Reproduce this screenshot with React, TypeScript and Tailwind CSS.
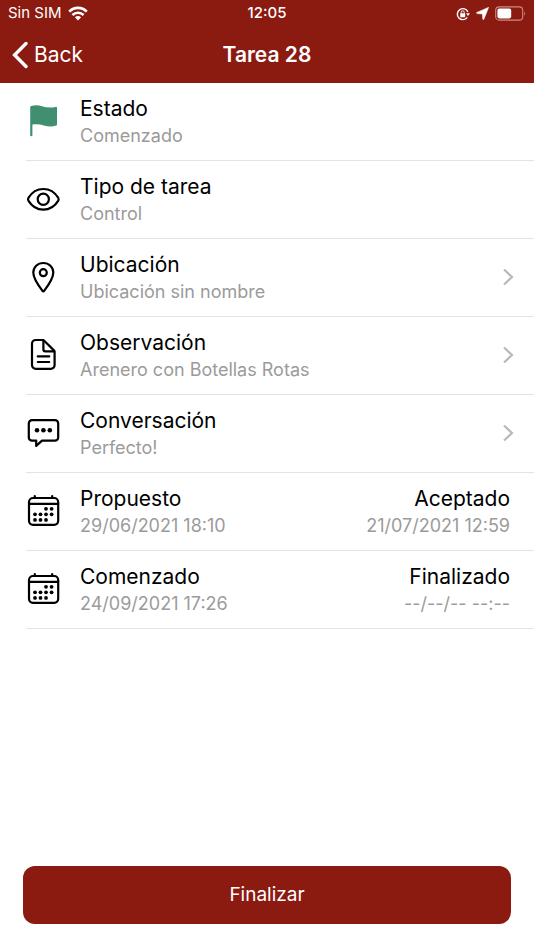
import React from "react";

const strokeProps = {
  fill: "none",
  stroke: "currentColor",
  strokeWidth: 2.2,
  strokeLinecap: "round",
  strokeLinejoin: "round",
} as const;

function IconBox({ children }: { children: React.ReactNode }) {
  return (
    <svg viewBox="0 0 34 35" className="h-[35px] w-[34px] shrink-0 overflow-visible" aria-hidden="true">
      {children}
    </svg>
  );
}

const FlagIcon = () => (
  <IconBox>
    <path
      fill="#3f8f70"
      d="M4.2 3.2C4.2 2.6 4.6 2.2 5.2 2C9 .7 12.5 1 16 2.2C20.5 3.8 25 4 29.6 2.9C30.4 2.7 31 3 31 3.8V20.4C31 21 30.7 21.3 30.2 21.5C26 22.9 22 22.6 18 21.4C14 20.2 10 19.8 6.4 20.6V31.2A1.1 1.1 0 0 1 4.2 31.2Z"
    />
  </IconBox>
);

const EyeIcon = () => (
  <IconBox>
    <g {...strokeProps}>
      <path d="M17.3 7C10.8 7 5.4 11 2.4 15.9Q1.7 17.3 2.4 18.6C5.4 23.6 10.8 27.6 17.3 27.6S29.3 23.6 32.3 18.6Q33 17.3 32.3 15.9C29.3 11 23.8 7 17.3 7Z" />
      <circle cx="17.3" cy="17.3" r="5.6" />
    </g>
  </IconBox>
);

const PinIcon = () => (
  <IconBox>
    <g {...strokeProps}>
      <path d="M17.3 3C11.6 3 7.3 7.2 7.3 12.6C7.3 18.6 13.8 27.4 16.5 30.9Q17.3 31.8 18.1 30.9C20.8 27.4 27.3 18.6 27.3 12.6C27.3 7.2 23 3 17.3 3Z" />
      <circle cx="17.3" cy="12.7" r="3.5" />
    </g>
  </IconBox>
);

const DocumentIcon = () => (
  <IconBox>
    <g {...strokeProps}>
      <path d="M28.6 14V27A3.8 3.8 0 0 1 24.8 30.8H9.8A3.8 3.8 0 0 1 6 27V5.8A3.8 3.8 0 0 1 9.8 2H16.6Q17.5 2 18.2 2.7L27.9 12.4Q28.6 13.1 28.6 14Z" />
      <path d="M17.4 2.4V11.4A1.9 1.9 0 0 0 19.3 13.3H28.2M11.8 18.4H23.2M11.8 24H23.2" />
    </g>
  </IconBox>
);

const ChatIcon = () => (
  <IconBox>
    <path
      {...strokeProps}
      d="M6 4.2H29A3.2 3.2 0 0 1 32.2 7.4V21.4A3.2 3.2 0 0 1 29 24.6H16L10.2 29.9V24.6H6A3.2 3.2 0 0 1 2.8 21.4V7.4A3.2 3.2 0 0 1 6 4.2Z"
    />
    <g fill="currentColor">
      <circle cx="11" cy="14.3" r="2.3" />
      <circle cx="17.4" cy="14.3" r="2.3" />
      <circle cx="23.8" cy="14.3" r="2.3" />
    </g>
  </IconBox>
);

const calendarDots = [
  [20, 14.8],
  [25.6, 14.8],
  [9, 20.3],
  [14.5, 20.3],
  [20, 20.3],
  [25.6, 20.3],
  [9, 25.9],
  [14.5, 25.9],
  [20, 25.9],
];

const CalendarIcon = () => (
  <IconBox>
    <g {...strokeProps}>
      <rect x="3" y="4" width="29.2" height="26.8" rx="4" />
      <path d="M3 9.8H32.2M8.8 2V4M26.2 2V4" />
    </g>
    {calendarDots.map(([cx, cy]) => (
      <circle key={`${cx}-${cy}`} cx={cx} cy={cy} r="1.9" fill="currentColor" />
    ))}
  </IconBox>
);

interface Row {
  icon: React.ReactNode;
  title: string;
  value: string;
  endTitle?: string;
  endValue?: string;
  link?: boolean;
}

const rows: Row[] = [
  { icon: <FlagIcon />, title: "Estado", value: "Comenzado" },
  { icon: <EyeIcon />, title: "Tipo de tarea", value: "Control" },
  { icon: <PinIcon />, title: "Ubicación", value: "Ubicación sin nombre", link: true },
  { icon: <DocumentIcon />, title: "Observación", value: "Arenero con Botellas Rotas", link: true },
  { icon: <ChatIcon />, title: "Conversación", value: "Perfecto!", link: true },
  {
    icon: <CalendarIcon />,
    title: "Propuesto",
    value: "29/06/2021 18:10",
    endTitle: "Aceptado",
    endValue: "21/07/2021 12:59",
  },
  {
    icon: <CalendarIcon />,
    title: "Comenzado",
    value: "24/09/2021 17:26",
    endTitle: "Finalizado",
    endValue: "--/--/-- --:--",
  },
];

function RowText({ title, value, className = "" }: { title: string; value: string; className?: string }) {
  return (
    <div className={className}>
      <div className="text-[21px] leading-[30px] text-black">{title}</div>
      <div className="text-[18px] leading-6 text-[#9b9b9b]">{value}</div>
    </div>
  );
}

function ListRow({ row }: { row: Row }) {
  const content = (
    <>
      {row.icon}
      <RowText title={row.title} value={row.value} className="ml-5 flex-1" />
      {row.endTitle && row.endValue && (
        <RowText title={row.endTitle} value={row.endValue} className="pr-1 text-right" />
      )}
      {row.link && (
        <svg viewBox="0 0 12 18" className="h-[18px] w-3" aria-hidden="true">
          <path d="M2 1.5L10 9L2 16.5" fill="none" stroke="#b9b9b9" strokeWidth="2.2" />
        </svg>
      )}
    </>
  );
  const line = "flex w-full items-center pt-[11px] pb-3 pr-5 text-left";

  return (
    <li className="ml-[26px] border-b border-[#e3e3e3]">
      {row.link ? (
        <a href="#" className={line}>
          {content}
        </a>
      ) : (
        <div className={line}>{content}</div>
      )}
    </li>
  );
}

function StatusBar() {
  return (
    <div className="grid h-[27px] grid-cols-3 items-center px-2 text-[15px]">
      <div className="flex items-center gap-1.5">
        <span>Sin SIM</span>
        <svg viewBox="0 0 20 15" className="h-[15px] w-5" aria-hidden="true">
          <g fill="none" stroke="white" strokeWidth="2.6">
            <path d="M1.2 5.6C6.2 .6 13.8 .6 18.8 5.6" />
            <path d="M4.4 9C7.6 5.9 12.4 5.9 15.6 9" />
          </g>
          <path fill="white" d="M6.9 11.3Q10 8.6 13.1 11.3L10 14.6Z" />
        </svg>
      </div>
      <div className="text-center font-medium">12:05</div>
      <div className="flex items-center justify-end gap-1.5">
        <svg viewBox="0 0 14 14" className="h-[14px] w-[14px]" aria-hidden="true">
          <path d="M11.9 5A5.5 5.5 0 1 0 11.3 10.4" fill="none" stroke="white" strokeWidth="1.4" />
          <path d="M10 6.2H14L12 9Z" fill="white" />
          <rect x="4.2" y="6.3" width="5" height="3.9" rx=".5" fill="white" />
          <path d="M5.2 6.6V5.3A1.5 1.5 0 0 1 8.2 5.3V6.6" fill="none" stroke="white" strokeWidth="1" />
        </svg>
        <svg viewBox="0 0 13 13" className="h-[13px] w-[13px]" aria-hidden="true">
          <path d="M12.7 .3L7.9 12.3Q7.2 13.1 6.8 12.2L6.3 7L1 6.6Q-.1 6.2 .8 5.4Z" fill="white" stroke="white" strokeWidth=".5" />
        </svg>
        <svg viewBox="0 0 31 15" className="h-[15px] w-[31px]" aria-hidden="true">
          <rect x=".7" y=".9" width="27" height="13.2" rx="3.4" fill="none" stroke="#c98a85" strokeWidth="1.1" />
          <rect x="2.4" y="2.6" width="13.8" height="9.8" rx="1.8" fill="white" />
          <path d="M29.2 5.2Q31 7.5 29.2 9.8Z" fill="#c98a85" />
        </svg>
      </div>
    </div>
  );
}

export default function App() {
  return (
    <div className="flex min-h-screen flex-col bg-white font-['Inter','Liberation_Sans',sans-serif] text-black">
      <header className="bg-[#8b1a10] text-white">
        <StatusBar />
        <div className="grid h-14 grid-cols-3 items-center px-3">
          <button type="button" className="flex items-center gap-1.5 text-[21px]">
            <svg viewBox="0 0 16 28" className="h-7 w-4" aria-hidden="true">
              <path d="M14 2.5L2.6 14L14 25.5" fill="none" stroke="white" strokeWidth="3.4" strokeLinecap="round" />
            </svg>
            Back
          </button>
          <h1 className="text-center text-[21px] font-semibold">Tarea 28</h1>
        </div>
      </header>
      <main className="flex flex-1 flex-col">
        <ul>
          {rows.map((row) => (
            <ListRow key={row.title} row={row} />
          ))}
        </ul>
        <div className="mt-auto px-[23px] pb-[26px]">
          <button type="button" className="h-[58px] w-full rounded-xl bg-[#8b1a10] text-[19px] text-white">
            Finalizar
          </button>
        </div>
      </main>
    </div>
  );
}
